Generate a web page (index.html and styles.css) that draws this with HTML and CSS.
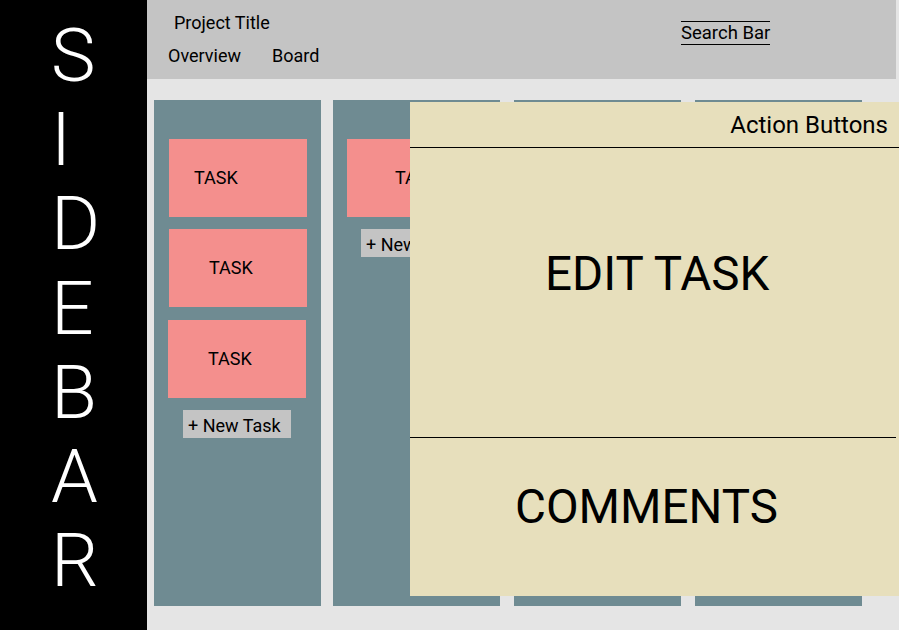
FILE: index.html
```html
<!DOCTYPE html>
<html lang="en">
<head>
<meta charset="utf-8">
<title>Board</title>
<link rel="stylesheet" href="styles.css">
</head>
<body>
<div class="app">
  <aside class="sidebar">
    <span class="sidebar__letter">S</span>
    <span class="sidebar__letter">I</span>
    <span class="sidebar__letter">D</span>
    <span class="sidebar__letter">E</span>
    <span class="sidebar__letter">B</span>
    <span class="sidebar__letter">A</span>
    <span class="sidebar__letter">R</span>
  </aside>
  <main class="main">
    <header class="topbar">
      <div class="topbar__left">
        <div class="topbar__title">Project Title</div>
        <nav class="topbar__nav">
          <span class="topbar__link">Overview</span>
          <span class="topbar__link">Board</span>
        </nav>
      </div>
      <div class="search">Search Bar</div>
    </header>
    <section class="board">
      <div class="column column--first">
        <div class="task task--a">TASK</div>
        <div class="task task--b">TASK</div>
        <div class="task task--b task--shift">TASK</div>
        <div class="new-task">+ New Task</div>
      </div>
      <div class="column column--second">
        <div class="task task--c">TASK</div>
        <div class="new-task">+ New Task</div>
      </div>
      <div class="column column--third"></div>
      <div class="column column--fourth"></div>
    </section>
  </main>
  <div class="panel">
    <div class="panel__actions">Action Buttons</div>
    <div class="panel__edit">EDIT TASK</div>
    <div class="panel__comments">COMMENTS</div>
  </div>
</div>
</body>
</html>
```
FILE: styles.css
```css
* { box-sizing: border-box; }

html, body {
  margin: 0;
  padding: 0;
}

body {
  width: 899px;
  height: 630px;
  overflow: hidden;
  background: #e5e5e5;
  font-family: Roboto, "Liberation Sans", Arial, sans-serif;
  color: #000;
}

.app {
  position: relative;
  display: flex;
  width: 899px;
  height: 630px;
}

/* Sidebar */
.sidebar {
  width: 147px;
  flex: 0 0 147px;
  height: 630px;
  background: #000;
  color: #fff;
  display: flex;
  flex-direction: column;
  padding: 13px 0 0 51px;
}

.sidebar__letter {
  display: block;
  font-size: 75px;
  font-weight: 300;
  line-height: 84.2px;
}

/* Main */
.main {
  flex: 1;
  display: flex;
  flex-direction: column;
}

.topbar {
  height: 79px;
  margin-right: 3px;
  background: #c4c4c4;
  display: flex;
  align-items: flex-start;
}

.topbar__left {
  display: flex;
  flex-direction: column;
  padding-left: 21px;
}

.topbar__title {
  font-size: 18px;
  line-height: 18px;
  margin-top: 14px;
  padding-left: 6px;
}

.topbar__nav {
  display: flex;
  gap: 31px;
  margin-top: 15px;
  font-size: 18px;
  line-height: 18px;
}

.search {
  margin-left: auto;
  margin-right: 126px;
  margin-top: 21px;
  width: 89px;
  height: 24px;
  border-top: 1px solid #000;
  border-bottom: 1px solid #000;
  font-size: 18.5px;
  line-height: 21px;
  padding-top: 1px;
  white-space: nowrap;
}

/* Board */
.board {
  display: flex;
  padding: 21px 0 0 7px;
}

.column {
  width: 167px;
  height: 506px;
  background: #6f8b92;
  display: flex;
  flex-direction: column;
  align-items: flex-start;
}

.column--second { margin-left: 12px; }
.column--third { margin-left: 14px; }
.column--fourth { margin-left: 14px; }

.column--first { padding: 39px 0 0 15px; }
.column--second { padding: 39px 0 0 14px; }

.task {
  width: 138px;
  height: 78px;
  background: #f48f8d;
  display: flex;
  align-items: center;
  font-size: 18px;
  line-height: 18px;
  margin-bottom: 12px;
}

.task--a { padding-left: 25px; }
.task--b { padding-left: 40px; }
.task--c { padding-left: 48px; }
.task--shift { margin-left: -1px; margin-top: 1px; }

.new-task {
  width: 108px;
  height: 28px;
  margin-left: 14px;
  background: #c4c4c4;
  font-size: 18px;
  line-height: 24px;
  padding: 4px 0 0 5px;
  white-space: nowrap;
  overflow: hidden;
}

/* Overlay panel */
.panel {
  position: absolute;
  left: 410px;
  top: 102px;
  width: 489px;
  height: 494px;
  background: #e7dfbc;
  display: flex;
  flex-direction: column;
}

.panel__actions {
  height: 46px;
  border-bottom: 1px solid #000;
  font-size: 24px;
  line-height: 24px;
  text-align: right;
  padding: 11px 11px 0 0;
}

.panel__edit {
  height: 290px;
  margin-right: 3px;
  border-bottom: 1px solid #000;
  font-size: 47.5px;
  line-height: 47.5px;
  padding: 103px 0 0 135px;
  white-space: nowrap;
}

.panel__comments {
  flex: 1;
  font-size: 47.5px;
  line-height: 47.5px;
  padding: 46px 0 0 105px;
  white-space: nowrap;
}
```
